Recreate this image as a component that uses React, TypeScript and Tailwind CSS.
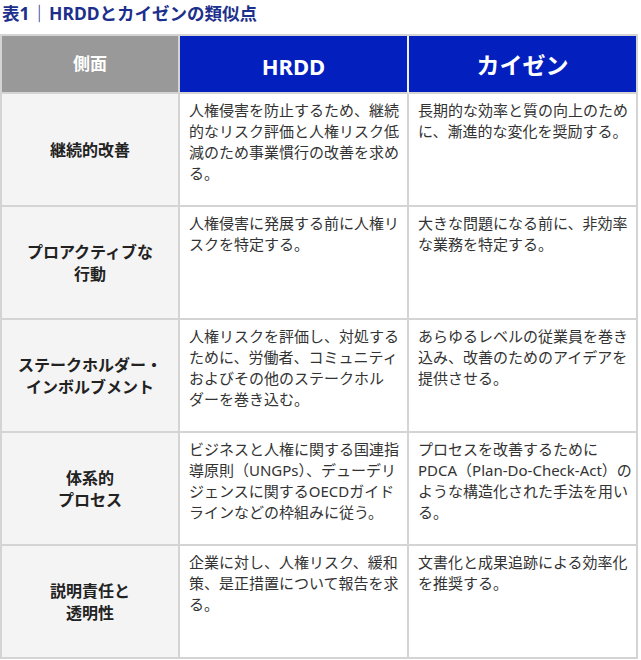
import type { ReactNode } from 'react';

const FONT = { fontFamily: '"Noto Sans", "Noto Sans CJK JP", sans-serif' };

interface Row {
	aspect: string[];
	hrdd: string[];
	kaizen: string[];
}

// Lines are broken where the reference breaks them
const ROWS: Row[] = [
	{
		aspect: ['継続的改善'],
		hrdd: ['人権侵害を防止するため、継続', '的なリスク評価と人権リスク低', '減のため事業慣行の改善を求め', 'る。'],
		kaizen: ['長期的な効率と質の向上のため', 'に、漸進的な変化を奨励する。']
	},
	{
		aspect: ['プロアクティブな', '行動'],
		hrdd: ['人権侵害に発展する前に人権リ', 'スクを特定する。'],
		kaizen: ['大きな問題になる前に、非効率', 'な業務を特定する。']
	},
	{
		aspect: ['ステークホルダー・', 'インボルブメント'],
		hrdd: ['人権リスクを評価し、対処する', 'ために、労働者、コミュニティ', 'およびその他のステークホル', 'ダーを巻き込む。'],
		kaizen: ['あらゆるレベルの従業員を巻き', '込み、改善のためのアイデアを', '提供させる。']
	},
	{
		aspect: ['体系的', 'プロセス'],
		hrdd: ['ビジネスと人権に関する国連指', '導原則（UNGPs）、デューデリ', 'ジェンスに関するOECDガイド', 'ラインなどの枠組みに従う。'],
		kaizen: ['プロセスを改善するために', 'PDCA（Plan-Do-Check-Act）の', 'ような構造化された手法を用い', 'る。']
	},
	{
		aspect: ['説明責任と', '透明性'],
		hrdd: ['企業に対し、人権リスク、緩和', '策、是正措置について報告を求', 'る。'],
		kaizen: ['文書化と成果追跡による効率化', 'を推奨する。']
	}
];

function Lines({ lines }: { lines: string[] }): ReactNode {
	return lines.map((line, i) => (
		<span key={i} className="block whitespace-nowrap">
			{line}
		</span>
	));
}

export default function App() {
	return (
		<div className="w-[641px] h-[660px] bg-white overflow-hidden" style={FONT}>
			{/* Title */}
			<div className="h-[34px] pt-[3px] pl-[2px]">
				<h2 className="text-[17.5px] leading-[20px] font-bold text-[#1c2f8c]">
					表1<span className="px-[1px]">｜</span>HRDDとカイゼンの類似点
				</h2>
			</div>

			{/* Table */}
			<div className="grid grid-cols-[178px_229px_229px] w-[638px] border-l-2 border-t-2 border-[#d4d4d4]">
				{/* Header */}
				<div className="h-[58px] bg-[#999999] border-r-2 border-b-2 border-[#d4d4d4] flex items-center justify-center text-white text-[17px] font-bold">
					側面
				</div>
				<div className="h-[58px] bg-[#0320bf] border-r-2 border-b-2 border-r-[#eef0fa] border-b-[#d4d4d4] flex items-center justify-center pt-[4px] text-white text-[22px] font-bold">
					HRDD
				</div>
				<div className="h-[58px] bg-[#0320bf] border-r-2 border-b-2 border-[#d4d4d4] flex items-center justify-center pt-[2px] text-white text-[23px] font-bold">
					カイゼン
				</div>

				{/* Body */}
				{ROWS.map((row, i) => (
					<div key={i} className="contents">
						<div className="h-[113px] bg-[#f4f4f4] border-r-2 border-b-2 border-[#d4d4d4] flex flex-col items-center justify-center text-center text-[16px] leading-[22px] font-bold text-[#222222]">
							<Lines lines={row.aspect} />
						</div>
						<div className="h-[113px] border-r-2 border-b-2 border-[#d4d4d4] pt-[6px] pl-[9px] text-[15px] leading-[21px] text-[#333333]">
							<Lines lines={row.hrdd} />
						</div>
						<div className="h-[113px] border-r-2 border-b-2 border-[#d4d4d4] pt-[6px] pl-[9px] text-[15px] leading-[21px] text-[#333333]">
							<Lines lines={row.kaizen} />
						</div>
					</div>
				))}
			</div>
		</div>
	);
}
